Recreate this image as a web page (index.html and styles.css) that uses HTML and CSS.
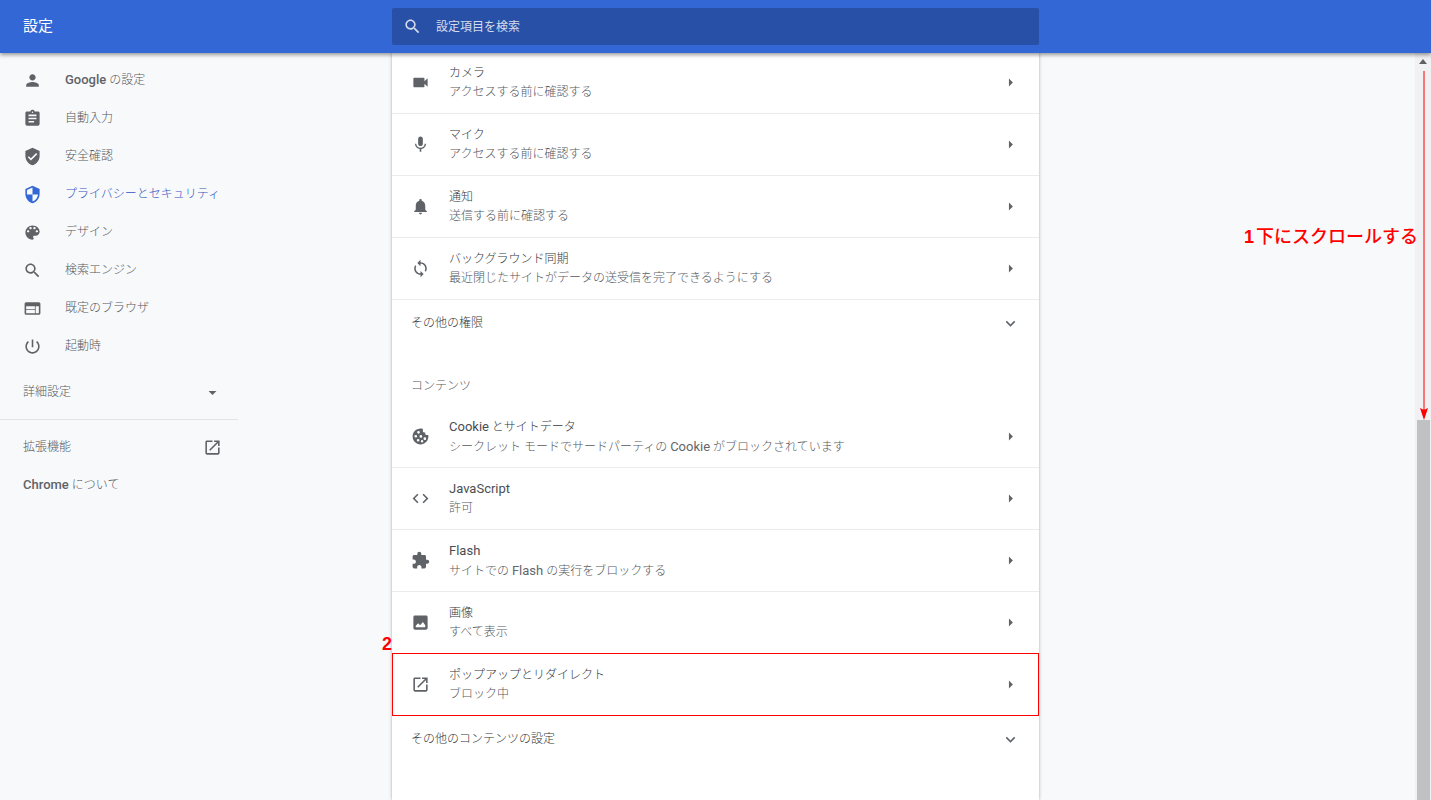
FILE: index.html
```html
<!DOCTYPE html>
<html lang="ja">
<head>
<meta charset="utf-8">
<title>設定</title>
<link rel="stylesheet" href="styles.css">
</head>
<body>
<svg class="defs" aria-hidden="true">
  <symbol id="search" viewBox="0 0 24 24"><path d="M15.5 14h-.79l-.28-.27C15.41 12.59 16 11.11 16 9.5 16 5.91 13.09 3 9.5 3S3 5.91 3 9.5 5.91 16 9.5 16c1.61 0 3.09-.59 4.23-1.57l.27.28v.79l5 4.99L20.49 19l-4.99-5zm-6 0C7.01 14 5 11.99 5 9.5S7.01 5 9.5 5 14 7.01 14 9.5 11.99 14 9.5 14z"/></symbol>
  <symbol id="person" viewBox="0 0 24 24"><path d="M12 12c2.21 0 4-1.79 4-4s-1.79-4-4-4-4 1.79-4 4 1.79 4 4 4zm0 2c-2.67 0-8 1.34-8 4v2h16v-2c0-2.66-5.33-4-8-4z"/></symbol>
  <symbol id="assignment" viewBox="0 0 24 24"><path d="M19 3h-4.18C14.4 1.84 13.3 1 12 1c-1.3 0-2.4.84-2.82 2H5c-1.1 0-2 .9-2 2v14c0 1.1.9 2 2 2h14c1.1 0 2-.9 2-2V5c0-1.1-.9-2-2-2zm-7 0c.55 0 1 .45 1 1s-.45 1-1 1-1-.45-1-1 .45-1 1-1zm2 14H7v-2h7v2zm3-4H7v-2h10v2zm0-4H7V7h10v2z"/></symbol>
  <symbol id="verified" viewBox="0 0 24 24"><path d="M12 1L3 5v6c0 5.55 3.84 10.74 9 12 5.16-1.26 9-6.45 9-12V5l-9-4zm-2 16l-4-4 1.41-1.41L10 14.17l6.59-6.59L18 9l-8 8z"/></symbol>
  <symbol id="security" viewBox="0 0 24 24"><path d="M12 1L3 5v6c0 5.55 3.84 10.74 9 12 5.16-1.26 9-6.45 9-12V5l-9-4zm0 10.99h7c-.53 4.12-3.28 7.79-7 8.94V12H5V6.3l7-3.11v8.8z"/></symbol>
  <symbol id="palette" viewBox="0 0 24 24"><path d="M12 3c-4.97 0-9 4.03-9 9s4.03 9 9 9c.83 0 1.5-.67 1.5-1.5 0-.39-.15-.74-.39-1.01-.23-.26-.38-.61-.38-.99 0-.83.67-1.5 1.5-1.5H16c2.76 0 5-2.24 5-5 0-4.42-4.03-8-9-8zm-5.5 9c-.83 0-1.5-.67-1.5-1.5S5.67 9 6.5 9 8 9.67 8 10.5 7.33 12 6.5 12zm3-4C8.67 8 8 7.33 8 6.5S8.67 5 9.5 5s1.5.67 1.5 1.5S10.33 8 9.5 8zm5 0c-.83 0-1.5-.67-1.5-1.5S13.67 5 14.5 5s1.5.67 1.5 1.5S15.33 8 14.5 8zm3 4c-.83 0-1.5-.67-1.5-1.5S16.67 9 17.5 9s1.5.67 1.5 1.5-.67 1.5-1.5 1.5z"/></symbol>
  <symbol id="web" viewBox="0 0 24 24"><path d="M20 4H4c-1.1 0-1.99.9-1.99 2L2 18c0 1.1.9 2 2 2h16c1.1 0 2-.9 2-2V6c0-1.1-.9-2-2-2zm-5 14H4v-4h11v4zm0-5H4V9h11v4zm5 5h-4V9h4v9z"/></symbol>
  <symbol id="power" viewBox="0 0 24 24"><path d="M13 3h-2v10h2V3zm4.83 2.17l-1.42 1.42C17.99 7.86 19 9.81 19 12c0 3.87-3.13 7-7 7s-7-3.13-7-7c0-2.19 1.01-4.14 2.58-5.42L6.17 5.17C4.23 6.82 3 9.26 3 12c0 4.97 4.03 9 9 9s9-4.03 9-9c0-2.74-1.23-5.18-3.17-6.83z"/></symbol>
  <symbol id="drop" viewBox="0 0 24 24"><path d="M7 10l5 5 5-5z"/></symbol>
  <symbol id="right" viewBox="0 0 24 24"><path d="M10 7v10l5-5z"/></symbol>
  <symbol id="more" viewBox="0 0 24 24"><path d="M16.59 8.59L12 13.17 7.41 8.59 6 10l6 6 6-6z"/></symbol>
  <symbol id="open" viewBox="0 0 24 24"><path d="M19 19H5V5h7V3H5c-1.11 0-2 .9-2 2v14c0 1.1.89 2 2 2h14c1.1 0 2-.9 2-2v-7h-2v7zM14 3v2h3.59l-9.83 9.83 1.41 1.41L19 6.41V10h2V3h-7z"/></symbol>
  <symbol id="camera" viewBox="0 0 24 24"><path d="M17 10.5V7c0-.55-.45-1-1-1H4c-.55 0-1 .45-1 1v10c0 .55.45 1 1 1h12c.55 0 1-.45 1-1v-3.5l4 4v-11l-4 4z"/></symbol>
  <symbol id="mic" viewBox="0 0 24 24"><path d="M12 14c1.66 0 2.99-1.34 2.99-3L15 5c0-1.66-1.34-3-3-3S9 3.34 9 5v6c0 1.66 1.34 3 3 3zm5.3-3c0 3-2.54 5.1-5.3 5.1S6.7 14 6.7 11H5c0 3.41 2.72 6.23 6 6.72V21h2v-3.28c3.28-.48 6-3.3 6-6.72h-1.7z"/></symbol>
  <symbol id="bell" viewBox="0 0 24 24"><path d="M12 22c1.1 0 2-.9 2-2h-4c0 1.1.89 2 2 2zm6-6v-5c0-3.07-1.64-5.64-4.5-6.32V4c0-.83-.67-1.5-1.5-1.5s-1.5.67-1.5 1.5v.68C7.63 5.36 6 7.92 6 11v5l-2 2v1h16v-1l-2-2z"/></symbol>
  <symbol id="sync" viewBox="0 0 24 24"><path d="M12 4V1L8 5l4 4V6c3.31 0 6 2.69 6 6 0 1.01-.25 1.97-.7 2.8l1.46 1.46C19.54 15.03 20 13.57 20 12c0-4.42-3.58-8-8-8zm0 14c-3.31 0-6-2.69-6-6 0-1.01.25-1.97.7-2.8L5.24 7.74C4.46 8.97 4 10.43 4 12c0 4.42 3.58 8 8 8v3l4-4-4-4v3z"/></symbol>
  <symbol id="cookie" viewBox="0 0 24 24"><path fill-rule="evenodd" d="M12.5 2C6.7 1.8 2 6.4 2 12s4.5 10 10 10 10-4.5 10-10c0-.7-.1-1.4-.2-2h-2.3c-1 0-1.5-.5-1.5-1.5V7h-1.5C15.5 7 15 6.4 15 5.5V2.5C14.2 2.2 13.4 2 12.5 2zM9.5 5a1.7 1.7 0 1 1 0 3.4 1.7 1.7 0 0 1 0-3.4zM6 10a1.7 1.7 0 1 1 0 3.4A1.7 1.7 0 0 1 6 10zm6.5.2a1.7 1.7 0 1 1 0 3.4 1.7 1.7 0 0 1 0-3.4zm5 2.8a1.7 1.7 0 1 1 0 3.4 1.7 1.7 0 0 1 0-3.4zm-8.5 2a1.7 1.7 0 1 1 0 3.4A1.7 1.7 0 0 1 9 15zm5 1.5a1.5 1.5 0 1 1 0 3 1.5 1.5 0 0 1 0-3z"/></symbol>
  <symbol id="code" viewBox="0 0 24 24"><path d="M9.4 16.6L4.8 12l4.6-4.6L8 6l-6 6 6 6 1.4-1.4zm5.2 0l4.6-4.6-4.6-4.6L16 6l6 6-6 6-1.4-1.4z"/></symbol>
  <symbol id="puzzle" viewBox="0 0 24 24"><path d="M20.5 11H19V7c0-1.1-.9-2-2-2h-4V3.5C13 2.12 11.88 1 10.5 1S8 2.12 8 3.5V5H4c-1.1 0-1.99.9-1.99 2v3.8H3.5c1.49 0 2.7 1.21 2.7 2.7s-1.21 2.7-2.7 2.7H2V20c0 1.1.9 2 2 2h3.8v-1.5c0-1.49 1.21-2.7 2.7-2.7 1.49 0 2.7 1.21 2.7 2.7V22H17c1.1 0 2-.9 2-2v-4h1.5c1.38 0 2.5-1.12 2.5-2.5S21.88 11 20.5 11z"/></symbol>
  <symbol id="image" viewBox="0 0 24 24"><path fill-rule="evenodd" d="M21 19V5c0-1.1-.9-2-2-2H5c-1.1 0-2 .9-2 2v14c0 1.1.9 2 2 2h14c1.1 0 2-.9 2-2zM6 18v-2l3-3 2.5 2.5 3.5-4 3 4V18z"/></symbol>
</svg>

<header class="toolbar">
  <h1 class="toolbar-title">設定</h1>
  <label class="search">
    <svg class="icon"><use href="#search"/></svg>
    <input class="search-input" type="text" placeholder="設定項目を検索" aria-label="設定項目を検索">
  </label>
</header>

<div class="page">
  <nav class="sidebar">
    <a class="nav-item" href="#"><svg class="icon"><use href="#person"/></svg><span><b class="latin">Google</b> の設定</span></a>
    <a class="nav-item" href="#"><svg class="icon"><use href="#assignment"/></svg><span>自動入力</span></a>
    <a class="nav-item" href="#"><svg class="icon"><use href="#verified"/></svg><span>安全確認</span></a>
    <a class="nav-item selected" href="#"><svg class="icon"><use href="#security"/></svg><span>プライバシーとセキュリティ</span></a>
    <a class="nav-item" href="#"><svg class="icon"><use href="#palette"/></svg><span>デザイン</span></a>
    <a class="nav-item" href="#"><svg class="icon"><use href="#search"/></svg><span>検索エンジン</span></a>
    <a class="nav-item" href="#"><svg class="icon"><use href="#web"/></svg><span>既定のブラウザ</span></a>
    <a class="nav-item" href="#"><svg class="icon"><use href="#power"/></svg><span>起動時</span></a>
    <button class="nav-item advanced" type="button"><span>詳細設定</span><svg class="icon"><use href="#drop"/></svg></button>
    <div class="nav-footer">
      <a class="nav-item split" href="#"><span>拡張機能</span><svg class="icon"><use href="#open"/></svg></a>
      <a class="nav-item split" href="#"><span><b class="latin">Chrome</b> について</span></a>
    </div>
  </nav>

  <main class="card">
    <section class="permissions">
      <button class="row" type="button"><svg class="icon"><use href="#camera"/></svg><span class="row-text"><span class="row-title">カメラ</span><span class="row-sub">アクセスする前に確認する</span></span><svg class="icon"><use href="#right"/></svg></button>
      <button class="row" type="button"><svg class="icon"><use href="#mic"/></svg><span class="row-text"><span class="row-title">マイク</span><span class="row-sub">アクセスする前に確認する</span></span><svg class="icon"><use href="#right"/></svg></button>
      <button class="row" type="button"><svg class="icon"><use href="#bell"/></svg><span class="row-text"><span class="row-title">通知</span><span class="row-sub">送信する前に確認する</span></span><svg class="icon"><use href="#right"/></svg></button>
      <button class="row" type="button"><svg class="icon"><use href="#sync"/></svg><span class="row-text"><span class="row-title">バックグラウンド同期</span><span class="row-sub">最近閉じたサイトがデータの送受信を完了できるようにする</span></span><svg class="icon"><use href="#right"/></svg></button>
      <button class="expander" type="button"><span>その他の権限</span><svg class="icon"><use href="#more"/></svg></button>
    </section>
    <section>
      <h2 class="section-title">コンテンツ</h2>
      <button class="row" type="button"><svg class="icon"><use href="#cookie"/></svg><span class="row-text"><span class="row-title"><span class="word">Cookie</span> とサイトデータ</span><span class="row-sub">シークレット モードでサードパーティの <span class="word">Cookie</span> がブロックされています</span></span><svg class="icon"><use href="#right"/></svg></button>
      <button class="row" type="button"><svg class="icon"><use href="#code"/></svg><span class="row-text"><span class="row-title"><span class="word">JavaScript</span></span><span class="row-sub">許可</span></span><svg class="icon"><use href="#right"/></svg></button>
      <button class="row" type="button"><svg class="icon"><use href="#puzzle"/></svg><span class="row-text"><span class="row-title"><span class="word">Flash</span></span><span class="row-sub">サイトでの <span class="word">Flash</span> の実行をブロックする</span></span><svg class="icon"><use href="#right"/></svg></button>
      <button class="row" type="button"><svg class="icon"><use href="#image"/></svg><span class="row-text"><span class="row-title">画像</span><span class="row-sub">すべて表示</span></span><svg class="icon"><use href="#right"/></svg></button>
      <div class="step">
        <span class="step-number">2</span>
        <button class="row highlighted" type="button"><svg class="icon"><use href="#open"/></svg><span class="row-text"><span class="row-title">ポップアップとリダイレクト</span><span class="row-sub">ブロック中</span></span><svg class="icon"><use href="#right"/></svg></button>
      </div>
      <button class="expander" type="button"><span>その他のコンテンツの設定</span><svg class="icon"><use href="#more"/></svg></button>
    </section>
  </main>

  <div class="scroll-area">
    <div class="scrollbar">
      <svg class="scroll-up" viewBox="0 0 8 5"><path d="M4 0l4 5H0z"/></svg>
      <div class="scroll-thumb"></div>
    </div>
    <p class="scroll-note"><b class="note-number">1</b>下にスクロールする</p>
    <svg class="scroll-arrow" viewBox="0 0 8 349"><path d="M3.5 0h1v340h-1zM0 337l4 2 4-2-4 12z"/></svg>
  </div>
</div>
</body>
</html>
```
FILE: styles.css
```css
* { box-sizing: border-box; }

body {
  margin: 0;
  height: 100vh;
  display: flex;
  flex-direction: column;
  overflow: hidden;
  background: #f8f9fb;
  color: #55595e;
  font: 300 12px/19px Roboto, "Noto Sans CJK JP", sans-serif;
}

.defs { display: none; }

.icon {
  width: 19px;
  height: 19px;
  flex: none;
  fill: #5f6368;
}

button {
  border: 0;
  padding: 0;
  background: none;
  color: inherit;
  font: inherit;
  text-align: left;
}

.toolbar {
  position: relative;
  z-index: 1;
  flex: none;
  height: 53px;
  display: grid;
  grid-template-columns: 1fr minmax(0, 647px) 1fr;
  align-items: center;
  background: #3367d6;
  color: #fff;
  box-shadow: 0 2px 4px rgba(0, 0, 0, 0.4);
}

.toolbar-title {
  margin: 0;
  padding-left: 23px;
  font-size: 15px;
  font-weight: 400;
}

.search {
  height: 37px;
  display: flex;
  align-items: center;
  gap: 14px;
  padding: 0 11px;
  border-radius: 2px;
  background: #2850a7;
  color: #d4dcee;
}

.search .icon { fill: currentColor; }

.search-input {
  flex: 1;
  min-width: 0;
  border: 0;
  padding: 1px 0 0;
  outline: 0;
  background: none;
  color: inherit;
  font: inherit;
  font-weight: 400;
}

.search-input::placeholder { color: inherit; opacity: 1; }

.page {
  flex: 1;
  min-height: 0;
  display: grid;
  grid-template-columns: 1fr minmax(0, 647px) 1fr;
}

.sidebar {
  max-width: 238px;
  padding-top: 8px;
}

.nav-item {
  width: 100%;
  height: 38px;
  display: flex;
  align-items: center;
  gap: 23px;
  padding: 0 16px 0 23px;
  color: inherit;
  text-decoration: none;
}

.selected { color: #3355c0; }
.selected .icon { fill: #3367d6; }

.latin {
  color: #5f6368;
  font-size: 13px;
  font-weight: 500;
}

.word {
  color: #63676c;
  font-size: 13px;
  font-weight: 400;
}

.row-title .word { color: #4a4e52; }

.advanced {
  height: 54px;
  justify-content: space-between;
}

.split { justify-content: space-between; }

.nav-footer {
  padding-top: 8px;
  border-top: 1px solid #e1e3e5;
}

.card {
  min-width: 0;
  background: #fff;
  box-shadow: 0 0 3px rgba(60, 64, 67, 0.45);
}

.row {
  width: 100%;
  min-height: 62px;
  display: flex;
  align-items: center;
  gap: 19px;
  padding: 0 19px;
  border-bottom: 1px solid #ececee;
}

.row-text {
  flex: 1;
  display: flex;
  flex-direction: column;
}

.row-title { color: #34383b; }

.permissions { margin-top: -1px; }

.expander {
  width: 100%;
  height: 46px;
  display: flex;
  align-items: center;
  justify-content: space-between;
  padding: 0 19px;
  color: #34383b;
}

.section-title {
  margin: 0;
  padding: 31px 19px 10px;
  font-size: 12px;
  font-weight: 300;
}

.step {
  position: relative;
  margin-top: -1px;
}

.step-number {
  position: absolute;
  right: 100%;
  top: -18px;
  color: #f00;
  font: 700 18px/19px "Liberation Sans", sans-serif;
}

.highlighted {
  min-height: 63px;
  padding: 0 18px;
  border: 1px solid #f00;
}

.scroll-area {
  position: relative;
  display: flex;
  justify-content: flex-end;
}

.scrollbar {
  width: 16px;
  display: flex;
  flex-direction: column;
  align-items: center;
  background: #f1f1f3;
}

.scroll-up {
  width: 8px;
  height: 5px;
  margin: 6px 0;
  fill: #606060;
}

.scroll-thumb {
  width: 13px;
  flex: 1;
  margin-top: 350px;
  background: #c0c1c3;
}

.scroll-note {
  position: absolute;
  right: 13px;
  top: 170px;
  margin: 0;
  color: #f00;
  font: 500 18px/24px "Noto Sans CJK JP", sans-serif;
  white-space: nowrap;
}

.note-number {
  padding-right: 2px;
  font: 700 18px/24px "Liberation Sans", sans-serif;
}

.scroll-arrow {
  position: absolute;
  right: 3px;
  top: 18px;
  width: 8px;
  height: 349px;
  fill: #f00;
}
```
